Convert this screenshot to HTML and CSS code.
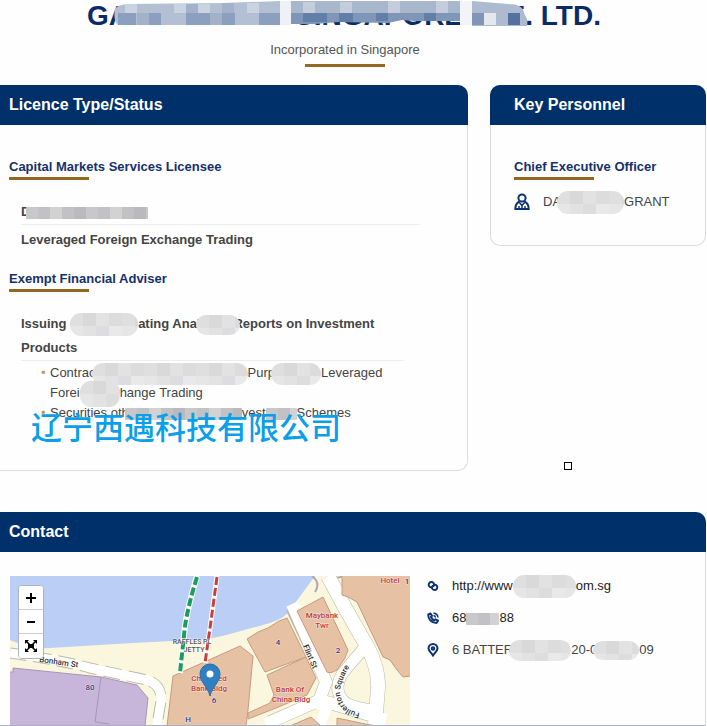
FILE: index.html
```html
<!DOCTYPE html>
<html lang="en">
<head>
    <meta charset="UTF-8">
    <meta name="viewport" content="width=device-width, initial-scale=1.0">
    <title>Financial Institution Detail</title>
    <link rel="stylesheet" href="styles.css">
</head>
<body>
    <!-- shared mosaic patterns -->
    <svg class="defs" aria-hidden="true">
        <defs>
            <pattern id="mosaic" width="52" height="26" patternUnits="userSpaceOnUse">
                <rect width="52" height="26" fill="#e2e2e3"/>
                <rect width="13" height="13" fill="#dfdfe0"/>
                <rect x="13" width="13" height="13" fill="#d9d9da"/>
                <rect x="39" width="13" height="13" fill="#dcdcdd"/>
                <rect y="13" width="13" height="13" fill="#e6e6e7"/>
                <rect x="26" y="13" width="13" height="13" fill="#dddddf"/>
                <rect x="39" y="13" width="13" height="13" fill="#e9e9ea"/>
            </pattern>
            <pattern id="mosaic-dark" width="60" height="14" patternUnits="userSpaceOnUse">
                <rect width="60" height="14" fill="#c2c2c4"/>
                <rect width="12" height="14" fill="#c8c8ca"/>
                <rect x="24" width="12" height="14" fill="#d2d2d3"/>
                <rect x="48" width="12" height="14" fill="#bababc"/>
            </pattern>
        </defs>
    </svg>

    <header class="page-head">
        <h1>GA<span class="name-gap"></span>SINGAPORE PTE. LTD.
            <svg class="title-mosaic" viewBox="0 0 415 25" aria-hidden="true">
                <path fill="#b3bfd3" d="M2 8 Q4 4 14 3 L110 2 L167 0 V24 H5 Q0 20 2 8z"/>
                <g fill="#c9d3e1"><path d="M12 3h12v9H12zM61 3h12v9H61zM85 3h12v9H85zM134 2h12v10h-12z"/></g>
                <g fill="#8d9fbe"><path d="M5 12h18v12H5zM36 12h12v12H36zM73 12h24v12H73zM109 12h13v12h-13zM146 12h21v12h-21z"/></g>
                <g fill="#a3b2ca"><path d="M24 12h12v12H24zM73 3h12v9H73zM109 2h12v10h-12zM97 12h12v12H97z"/></g>
                <path fill="#eef1f6" d="M167 0h11v24h-11z"/>
                <path fill="#a9b7cd" d="M178 0h169v12H178z"/>
                <g fill="#c3cddc"><path d="M190 1h12v11h-12zM227 1h12v11h-12zM275 0h12v12h-12zM323 0h12v12h-12z"/></g>
                <path fill="#8096b8" d="M178 12h169v8h-46l-12-1-14 3-49-1-24 2h-24z"/>
                <g fill="#637fa8"><path d="M190 12h24v9h-24zM226 12h14v9h-14zM263 12h12v8h-12zM311 12h12v8h-12z"/></g>
                <path fill="#f2f4f8" d="M347 0h12v24h-12z"/>
                <path fill="#adbad0" d="M359 0 L395 3 Q410 3 411 12 L414 18 V25 H359z"/>
                <path fill="#8195b8" d="M359 12h12v12h-12z"/>
                <path fill="#e3e8ef" d="M371 12h12v12h-12z"/>
                <path fill="#56719f" d="M395 12h12v12h-12z"/>
            </svg>
        </h1>
        <p class="origin">Incorporated in Singapore</p>
    </header>

    <main>
        <div class="columns">
            <section class="panel licence">
                <h2>Licence Type/Status</h2>
                <div class="panel-body">
                    <h3>Capital Markets Services Licensee</h3>
                    <ul class="activities">
                        <li>D<svg class="blot square near" width="122" height="12"><rect width="122" height="12" fill="url(#mosaic-dark)"/></svg></li>
                        <li>Leveraged Foreign Exchange Trading</li>
                    </ul>
                    <h3>Exempt Financial Adviser</h3>
                    <ul class="activities">
                        <li><span>Issuing </span><svg class="blot" width="68" height="23"><rect width="68" height="23" fill="url(#mosaic)"/></svg><span>ating Anal</span><svg class="blot near far" width="44" height="20"><rect width="44" height="20" fill="url(#mosaic)"/></svg><span>Reports on Investment</span><br>
                            <span>Products</span></li>
                    </ul>
                    <ul class="products">
                        <li>Contrac<svg class="blot near" width="156" height="22"><rect width="156" height="22" fill="url(#mosaic)"/></svg>Purp<svg class="blot near" width="50" height="22"><rect width="50" height="22" fill="url(#mosaic)"/></svg>Leveraged<br>
                            Forei<svg class="blot" width="40" height="26"><rect width="40" height="26" fill="url(#mosaic)"/></svg>hange Trading</li>
                        <li>Securities oth<svg class="blot square near" width="117" height="12"><rect width="117" height="12" fill="url(#mosaic-dark)"/></svg>vest<svg class="blot square" width="31" height="12"><rect width="31" height="12" fill="url(#mosaic-dark)"/></svg>Schemes</li>
                    </ul>
                </div>
                <div class="watermark" lang="zh">辽宁西遇科技有限公司</div>
            </section>

            <div class="side">
                <section class="panel personnel">
                    <h2>Key Personnel</h2>
                    <div class="panel-body">
                        <h3>Chief Executive Officer</h3>
                        <p class="person">
                            <svg class="icon" width="16" height="18" viewBox="0 0 16 18" fill="none" stroke="#0d3370" stroke-width="2">
                                <circle cx="8" cy="5" r="3.6"/>
                                <path d="M5.5 8.5C2.5 10 1.3 12 1.3 16h13.4c0-4-1.200-6-4.200-7.500"/>
                                <path d="M5 9l3 3.500L11 9M8 12v4M5 13v3M11 13v3" stroke-width="1.500"/>
                            </svg>
                            <span>DA<svg class="blot near" width="67" height="23"><rect width="67" height="23" fill="url(#mosaic)"/></svg>GRANT</span>
                        </p>
                    </div>
                </section>
                <span class="handle"></span>
            </div>
        </div>

        <section class="panel contact">
            <h2>Contact</h2>
            <div class="contact-body">
                <div class="map">
                    <svg class="map-tiles" viewBox="0 0 400 149" preserveAspectRatio="xMinYMin slice" role="img" aria-label="Map">
                        <rect width="400" height="149" fill="#fbf7de"/>
                        <path fill="#bbcff6" d="M0 0H305L280 34Q277 41 260 47L220 58Q203 63 183 64L123 67L23 73L0 64z"/>
                        <path d="M302 0q9 7 3 16M320 0q8 4 14-1" fill="none" stroke="#aaa9b5" stroke-width="2"/>

                        <!-- roads -->
                        <g fill="none" stroke="#bcb9a3" stroke-linejoin="round">
                            <path stroke-width="13" d="M282 32L307 85L316 106L306 133M260 146L310 124L372 143"/>
                            <path stroke-width="15" d="M318 0L334 30L358 72Q369 94 368 112L365 149"/>
                            <path stroke-width="12" d="M354 72Q342 86 332 98Q322 116 336 127Q345 132 364 134"/>
                            <path stroke-width="11" stroke-dasharray="17 7" d="M0 77Q50 84 80 92L132 103Q152 106 151 125L147 149"/>
                        </g>
                        <g fill="none" stroke="#fff" stroke-linejoin="round">
                            <path stroke-width="12" d="M282 28L307 85L316 106L306 133M256 148L310 124L376 144"/>
                            <path stroke-width="14" d="M318 0L334 30L358 72Q369 94 368 112L365 149"/>
                            <path stroke-width="11" d="M354 72Q342 86 332 98Q322 116 336 127Q345 132 364 134"/>
                            <path stroke-width="9" d="M0 77Q50 84 80 92L132 103Q152 106 151 125L147 149"/>
                            <path stroke-width="11" d="M318 128l-8 21"/>
                        </g>

                        <!-- buildings -->
                        <g fill="#c7b5da" stroke="#a795ba">
                            <path d="M-1 96H3V92L91 101L127 109L138 122L135 150H-1z"/>
                            <path fill="none" d="M91 101L85 146L99 148"/>
                        </g>
                        <g fill="#e6c1a4" stroke="#c69b80">
                            <path d="M163 100L230 70L243 80L238 134L236 150H157z"/>
                            <path d="M277 42L269 45L258 52L248 56L237 63L255 96L296 81z"/>
                            <path d="M296 81L257 99L264 119L260 127L238 137V143L266 132L297 119L306 102z"/>
                            <path d="M287 35L313 21L338 74L335 82L327 94Q320 98 317 96z"/>
                            <path d="M332 -1V19L338 21L347 26L373 81L380 84L387 94L393 101L401 100V-1z"/>
                            <path d="M280 150L301 141L311 150zM327 150V142L365 150z"/>
                        </g>

                        <!-- ferry lines -->
                        <g fill="none" stroke="#fff" stroke-width="6">
                            <path d="M187 0Q178 30 175 50L170 97"/>
                            <path d="M207 0L201 45L195 87" stroke-width="5"/>
                        </g>
                        <g fill="none" stroke-dasharray="8 3">
                            <path stroke="#1c9d5c" stroke-width="4" d="M187 1Q178 30 175 50L170 97"/>
                            <path stroke="#c8403a" stroke-width="3" d="M207 1L201 45L195 87"/>
                        </g>

                        <g class="road-label">
                            <text transform="translate(29 86) rotate(8)">Bonham St</text>
                            <text transform="translate(293 70) rotate(67)">Flint St</text>
                            <path id="square-path" fill="none" d="M350 137Q332 134 330 117Q330 100 353 73"/>
                            <text><textPath href="#square-path">Fullerton Square</textPath></text>
                        </g>
                        <g class="jetty-label">
                            <text x="182" y="68">RAFFLES PL</text>
                            <text x="184" y="76">JETTY</text>
                        </g>
                        <g class="place-label">
                            <text x="199" y="105">Chartered</text>
                            <text x="199" y="115">Bank Bldg</text>
                            <text x="280" y="116">Bank Of</text>
                            <text x="281" y="126">China Bldg</text>
                            <text x="312" y="42">Maybank</text>
                            <text x="312" y="52">Twr</text>
                            <text x="380" y="7">Hotel</text>
                        </g>
                        <g class="house-number">
                            <text x="80" y="114">80</text>
                            <text x="204" y="127">6</text>
                            <text x="178" y="146">H</text>
                            <text x="268" y="69">4</text>
                            <text x="328" y="77">2</text>
                            <text x="397" y="8">1</text>
                        </g>

                        <path fill="#2f7fc3" stroke="#2a6da8" d="M200 120C198 111 190 106 190 98A10 10 0 0 1 210 98C210 106 202 111 200 120z"/>
                        <circle cx="200" cy="98" r="3.500" fill="#fff"/>
                    </svg>
                    <div class="map-controls">
                        <button type="button" aria-label="Zoom in"><svg width="12" height="12"><path d="M6 1v10M1 6h10" stroke="#000" stroke-width="2"/></svg></button>
                        <button type="button" aria-label="Zoom out"><svg width="12" height="12"><path d="M2 6h8" stroke="#000" stroke-width="2"/></svg></button>
                        <button type="button" aria-label="Full screen"><svg width="12" height="12"><path d="M3 4h6v4H3zM0 0h4L0 4zM12 0v4L8 0zM0 12V8l4 4zM12 12H8l4-4z"/><path d="M1 1l10 10M11 1L1 11" stroke="#000" stroke-width="1.500"/></svg></button>
                    </div>
                </div>
                <ul class="details">
                    <li>
                        <svg class="icon" width="12" height="12" viewBox="0 0 12 12" fill="none" stroke="#0d3370" stroke-width="2" stroke-linecap="round">
                            <path d="M4.500 7.200L3 7A2.700 2.700 0 1 1 6.500 3Q8 5 6 6.200"/>
                            <path d="M7.500 4.800L9 5A2.700 2.700 0 1 1 5.500 9Q4 7 6 5.800"/>
                        </svg>
                        <a href="#">http://www<svg class="blot" width="63" height="23"><rect width="63" height="23" fill="url(#mosaic)"/></svg>om.sg</a>
                    </li>
                    <li>
                        <svg class="icon" width="12" height="12" viewBox="0 0 12 12" fill="none" stroke="#0d3370">
                            <path stroke-width="2" stroke-linejoin="round" d="M3.500 1.500L1.300 2.500Q1 6 3.500 8.500T9.500 11L11 8.700L8.500 7.300L7.200 8.300Q5 7.200 4 5L5 3.800z"/>
                            <path stroke-width="1.500" d="M6.500 1Q10.500 1.500 11 5.500M6.500 3.500Q8.300 3.800 8.500 5.500"/>
                        </svg>
                        <a href="#">68<svg class="blot square" width="33" height="12"><rect width="33" height="12" fill="url(#mosaic-dark)"/></svg>88</a>
                    </li>
                    <li>
                        <svg class="icon" width="12" height="14" viewBox="0 0 12 14" fill="none" stroke="#0d3370" stroke-width="2">
                            <path d="M6 12.500C4.500 10 1.500 8 1.500 5.500a4.500 4.500 0 0 1 9 0C10.500 8 7.500 10 6 12.500z"/>
                            <circle cx="6" cy="5.500" r="1.300"/>
                        </svg>
                        <span>6 BATTER<svg class="blot near" width="62" height="21"><rect width="62" height="21" fill="url(#mosaic)"/></svg>20-0<svg class="blot near" width="46" height="19"><rect width="46" height="19" fill="url(#mosaic)"/></svg>09</span>
                    </li>
                </ul>
            </div>
        </section>
    </main>
</body>
</html>
```

FILE: styles.css
```css
* {
    margin: 0;
    padding: 0;
    box-sizing: border-box;
}
body {
    background: #fefefe;
    color: #444;
    font-family: "Liberation Sans", Arial, sans-serif;
    font-size: 13px;
    line-height: 24px;
}
ul {
    list-style: none;
}
a {
    color: #222;
    text-decoration: none;
}
.defs {
    position: absolute;
    width: 0;
    height: 0;
}

/* page heading */
.page-head {
    padding-right: 17px;
    text-align: center;
}
h1 {
    position: relative;
    width: 516px;
    margin: 0 auto;
    color: #0a2c66;
    font-size: 28px;
    line-height: 31px;
    white-space: nowrap;
    text-align: left;
}
.name-gap {
    display: inline-block;
    width: 166px;
}
.title-mosaic {
    position: absolute;
    left: 26px;
    top: 1px;
    width: 415px;
    height: 25px;
}
.origin {
    padding-top: 7px;
    color: #555;
}
.origin::after {
    content: "";
    display: block;
    width: 80px;
    height: 3px;
    margin: 2px auto 0;
    background: #946820;
}

/* panels */
main {
    padding: 18px 1px 0 0;
}
.columns {
    display: grid;
    grid-template-columns: 13fr 6fr;
    gap: 22px;
    align-items: start;
}
.panel {
    background: #fefefe;
    border: 1px solid #dcdce0;
    border-top: none;
    border-radius: 10px;
}
.panel h2 {
    margin: 0 -1px;
    padding-left: 24px;
    border-radius: 10px 10px 0 0;
    background: #00306a;
    color: #fff;
    font-size: 16px;
    line-height: 40px;
}
.licence,
.contact {
    position: relative;
    border-left: none;
    border-radius: 0 10px 10px 0;
}
.licence h2,
.contact h2 {
    margin-left: 0;
    padding-left: 9px;
    border-radius: 0 10px 0 0;
}
.panel-body {
    padding: 31px 23px;
}
.licence .panel-body {
    padding: 31px 47px 47px 9px;
}
h3 {
    color: #15316b;
    font-size: 13px;
    line-height: 21px;
}
h3::after {
    content: "";
    display: block;
    width: 80px;
    height: 3px;
    background: #946820;
}
.activities {
    padding: 20px 0 0 12px;
    font-weight: bold;
}
.activities li + li {
    padding: 3px 0 16px;
    border-top: 1px solid #ededee;
}
.products {
    margin: 0 16px 0 12px;
    padding: 2px 0 0 29px;
    border-top: 1px solid #ededee;
    line-height: 20px;
    white-space: nowrap;
}
.products li {
    position: relative;
}
.products li::before {
    content: "•";
    position: absolute;
    left: -9px;
    color: #c39a5b;
}
.watermark {
    position: absolute;
    left: 31px;
    bottom: 24px;
    color: #0a9fe8;
    font-family: "Noto Sans CJK SC", sans-serif;
    font-size: 31px;
    font-weight: 500;
    line-height: 40px;
}

/* blotted out text */
.blot {
    display: inline-block;
    position: relative;
    margin: -8px 0;
    border-radius: 11px;
    vertical-align: middle;
}
.blot.square {
    border-radius: 1px;
}
.blot.near {
    margin-left: -4px;
}
.blot.far {
    margin-right: -7px;
}

.person {
    display: flex;
    align-items: center;
    gap: 13px;
    padding-top: 10px;
}
.personnel .panel-body {
    padding-bottom: 31px;
}
.handle {
    display: block;
    width: 8px;
    height: 8px;
    margin: 216px 0 0 74px;
    border: 1px solid #000;
}

/* contact */
.contact {
    margin-top: 41px;
    border-bottom-color: #a5b1c6;
    border-radius: 0 10px 0 0;
}
.contact-body {
    display: grid;
    grid-template-columns: 400fr 278fr;
    gap: 17px;
    padding: 18px 0 0 10px;
}
.map {
    position: relative;
    margin-top: 6px;
}
.map-tiles {
    display: block;
    width: 100%;
    height: 149px;
}
.map text {
    font-family: Roboto, sans-serif;
    font-size: 8px;
    font-weight: 500;
    stroke: #fff;
    stroke-width: 1px;
    stroke-opacity: 0.6;
    paint-order: stroke;
}
.road-label {
    fill: #333;
}
.jetty-label {
    fill: #545460;
    text-anchor: middle;
}
.map .jetty-label text {
    font-size: 7px;
}
.place-label {
    fill: #bd3b3b;
    text-anchor: middle;
}
.house-number {
    fill: #37377a;
    text-anchor: middle;
}
.map-controls {
    position: absolute;
    left: 8px;
    top: 9px;
    width: 26px;
    border: 1px solid #a9b4c9;
    border-radius: 4px;
    background: #fff;
    overflow: hidden;
}
.map-controls button {
    display: flex;
    align-items: center;
    justify-content: center;
    width: 100%;
    height: 24px;
    border: none;
    border-bottom: 1px solid #ccc;
    background: #fff;
    cursor: pointer;
}
.map-controls button:last-child {
    border-bottom: none;
}
.details li {
    display: flex;
    align-items: center;
    gap: 13px;
    line-height: 32px;
}
```
